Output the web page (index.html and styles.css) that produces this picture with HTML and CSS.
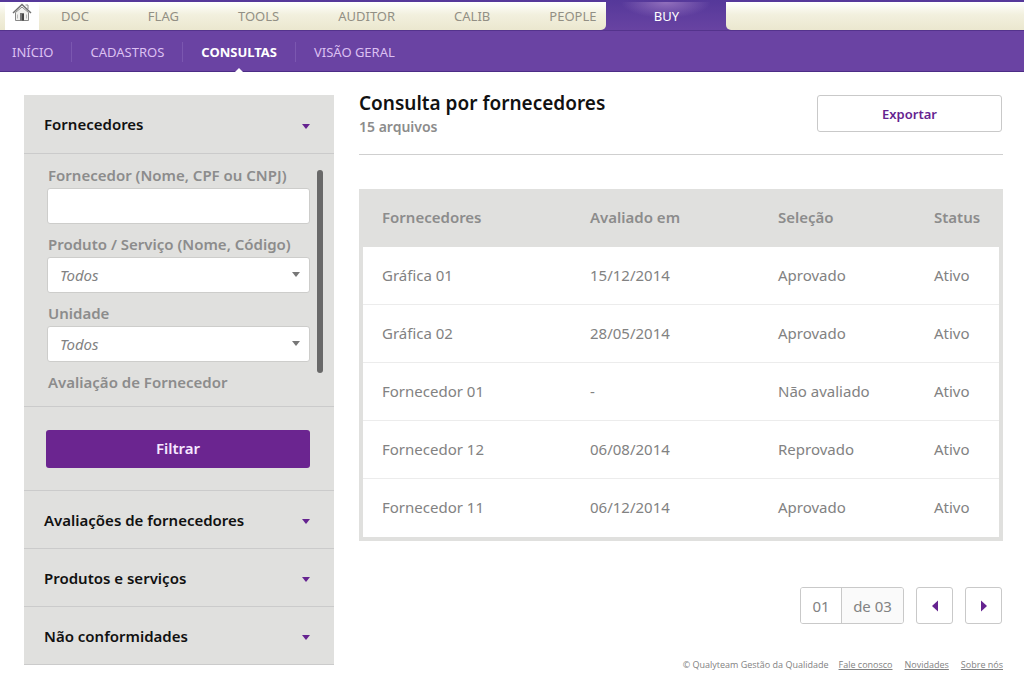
FILE: index.html
```html
<!DOCTYPE html>
<html lang="pt-BR">
<head>
<meta charset="utf-8">
<meta name="viewport" content="width=device-width, initial-scale=1">
<title>Consulta por fornecedores</title>
<link rel="stylesheet" href="styles.css">
</head>
<body>
<header>
  <nav class="modules" aria-label="Módulos">
    <div class="modules-left">
      <a class="home" href="#" aria-label="Home">
        <svg width="20" height="20" viewBox="0 0 20 20" fill="none">
          <path d="M13.500 3h2.500v4" stroke="#8a8a8a"/>
          <path d="M3.500 10.500v8h13v-8L10 5z" fill="#f1f1ef" stroke="#888"/>
          <path d="M1 11L10 2.500l9 8.500" stroke="#707070" stroke-width="1.500"/>
          <path d="M8 11h4v7.500H8z" fill="#777"/>
          <path d="M10 12v6.500h2V12z" fill="#444"/>
          <path d="M5.500 12.500v4M14.500 12.500v4" stroke="#bbb"/>
        </svg>
      </a>
      <a class="module" href="#">DOC</a>
      <a class="module" href="#">FLAG</a>
      <a class="module" href="#">TOOLS</a>
      <a class="module" href="#">AUDITOR</a>
      <a class="module" href="#">CALIB</a>
      <a class="module" href="#">PEOPLE</a>
    </div>
    <a class="module-current" href="#" aria-current="page">BUY</a>
    <div class="modules-right"></div>
  </nav>
  <nav class="sections" aria-label="Seções">
    <a class="section" href="#">INÍCIO</a>
    <a class="section" href="#">CADASTROS</a>
    <a class="section current" href="#" aria-current="page">CONSULTAS</a>
    <a class="section" href="#">VISÃO GERAL</a>
  </nav>
</header>
<div class="page">
  <aside class="sidebar">
    <button class="accordion" type="button" aria-expanded="true">Fornecedores<span class="caret"></span></button>
    <form class="filters">
      <div class="fields-area">
        <div class="fields">
          <div class="field">
            <label for="supplier">Fornecedor (Nome, CPF ou CNPJ)</label>
            <input class="control" id="supplier" type="text">
          </div>
          <div class="field">
            <label for="product">Produto / Serviço (Nome, Código)</label>
            <div class="select"><select class="control" id="product"><option>Todos</option></select></div>
          </div>
          <div class="field">
            <label for="unit">Unidade</label>
            <div class="select"><select class="control" id="unit"><option>Todos</option></select></div>
          </div>
          <div class="field"><span class="label">Avaliação de Fornecedor</span></div>
        </div>
        <div class="thumb"></div>
      </div>
      <div class="actions"><button class="filter-button" type="submit">Filtrar</button></div>
    </form>
    <button class="accordion" type="button">Avaliações de fornecedores<span class="caret"></span></button>
    <button class="accordion" type="button">Produtos e serviços<span class="caret"></span></button>
    <button class="accordion" type="button">Não conformidades<span class="caret"></span></button>
  </aside>
  <main class="content">
    <div class="heading">
      <div>
        <h1>Consulta por fornecedores</h1>
        <p class="count">15 arquivos</p>
      </div>
      <button class="export" type="button">Exportar</button>
    </div>
    <table class="results">
      <thead>
        <tr><th class="col-name">Fornecedores</th><th class="col-date">Avaliado em</th><th class="col-choice">Seleção</th><th class="col-status">Status</th></tr>
      </thead>
      <tbody>
        <tr><td>Gráfica 01</td><td>15/12/2014</td><td>Aprovado</td><td>Ativo</td></tr>
        <tr><td>Gráfica 02</td><td>28/05/2014</td><td>Aprovado</td><td>Ativo</td></tr>
        <tr><td>Fornecedor 01</td><td>-</td><td>Não avaliado</td><td>Ativo</td></tr>
        <tr><td>Fornecedor 12</td><td>06/08/2014</td><td>Reprovado</td><td>Ativo</td></tr>
        <tr><td>Fornecedor 11</td><td>06/12/2014</td><td>Aprovado</td><td>Ativo</td></tr>
      </tbody>
    </table>
    <div class="pager">
      <div class="pages">
        <input class="page-number" type="text" value="01" aria-label="Página">
        <span class="page-total">de 03</span>
      </div>
      <button class="step" type="button" aria-label="Anterior"><svg width="8" height="12" viewBox="0 0 8 12"><path d="M7 0.500v11L1 6z" fill="#652390"/></svg></button>
      <button class="step" type="button" aria-label="Próxima"><svg width="8" height="12" viewBox="0 0 8 12"><path d="M1 0.500v11L7 6z" fill="#652390"/></svg></button>
    </div>
    <footer class="footer">
      <span>© Qualyteam Gestão da Qualidade</span>
      <div class="links"><a href="#">Fale conosco</a><a href="#">Novidades</a><a href="#">Sobre nós</a></div>
    </footer>
  </main>
</div>
</body>
</html>
```
FILE: styles.css
```css
* { box-sizing: border-box; }
body {
  margin: 0;
  background: #fff;
  color: #828282;
  font: 15px/20px "Noto Sans", "Open Sans", sans-serif;
}
button, input, select { font: inherit; color: inherit; margin: 0; }
a { color: inherit; }
h1, p { margin: 0; }

.modules {
  display: flex;
  height: 31px;
  padding-top: 2px;
  background: linear-gradient(#55389a, #6843a2);
  border-bottom: 1px solid #54338c;
  font-size: 13px;
}
.modules a, .sections a { text-decoration: none; }
.modules-left, .modules-right {
  background: linear-gradient(#fff, #f2f0de 45%, #ebe7cf);
}
.modules-left {
  display: flex;
  align-items: center;
  gap: 59px;
  padding: 0 10px 0 5px;
  border-radius: 0 0 5px 0;
  color: #928f84;
}
.modules-right { flex: 1; border-radius: 0 0 0 5px; }
.home {
  display: flex;
  align-items: flex-start;
  justify-content: center;
  align-self: stretch;
  width: 34px;
  margin-right: -37px;
  background: #fff;
}
.module-current {
  display: flex;
  align-items: center;
  justify-content: center;
  width: 120px;
  color: #fff;
  background: radial-gradient(ellipse 45px 16px at 50% 0, #9270bd, transparent);
}
.sections {
  display: flex;
  align-items: center;
  height: 41px;
  padding: 2px 0 0;
  background: #6a43a3;
  border-bottom: 1px solid #4c2d86;
  font-size: 13px;
  color: #dcc0f2;
}
.section { padding: 0 18px; border-left: 1px solid #7b57b0; }
.section:first-child { padding-left: 12px; border-left: 0; }
.section.current { position: relative; color: #fff; font-weight: 700; }
.section.current::after {
  content: "";
  position: absolute;
  left: 50%;
  bottom: -10px;
  margin-left: -4px;
  border: 4px solid transparent;
  border-top: 0;
  border-bottom-color: #fff;
}

.page {
  display: grid;
  grid-template-columns: 310px 1fr;
  gap: 25px;
  align-items: start;
  padding: 23px 21px 16px 24px;
}
.sidebar { background: #e0e0de; }
.accordion {
  display: flex;
  align-items: center;
  justify-content: space-between;
  width: 100%;
  height: 59px;
  padding: 0 24px 0 20px;
  border: 0;
  border-bottom: 1px solid #cbcbcb;
  background: none;
  color: #111;
  font-weight: 600;
  text-align: left;
}
.filters ~ .accordion { height: 58px; }
.caret { border: 4px solid transparent; border-top: 5px solid #652390; border-bottom: 0; margin-top: 4px; }
.fields-area {
  display: flex;
  gap: 7px;
  padding: 10px 11px 11px 23px;
  border-bottom: 1px solid #cbcbcb;
}
.fields { flex: 1; display: grid; gap: 9px; }
.field label, .label { display: block; padding: 0 0 2px 1px; line-height: 22px; font-weight: 600; color: #8c8c8c; }
.control {
  display: block;
  width: 100%;
  height: 36px;
  padding: 0 12px;
  border: 1px solid #cdcdcb;
  border-radius: 3px;
  background: #fff;
}
.select { position: relative; }
.select select { appearance: none; font-style: italic; }
.select::after {
  content: "";
  position: absolute;
  right: 10px;
  top: 15px;
  border: 4px solid transparent;
  border-top: 5px solid #777;
  border-bottom: 0;
  pointer-events: none;
}
.thumb { width: 6px; height: 203px; margin-top: 6px; border-radius: 3px; background: #696969; }
.actions { padding: 23px 24px 22px 22px; border-bottom: 1px solid #cbcbcb; }
.filter-button {
  display: block;
  width: 100%;
  height: 38px;
  padding: 0 0 2px;
  border: 0;
  border-radius: 3px;
  background: #6b2590;
  color: #f6e8ff;
  font-weight: 600;
}

.heading {
  display: flex;
  justify-content: space-between;
  align-items: flex-start;
  height: 60px;
  padding-right: 1px;
  border-bottom: 1px solid #cfcfcf;
}
h1 { font-size: 19px; line-height: 16px; font-weight: 600; color: #111; }
.count { margin-top: 6px; font-size: 14px; font-weight: 600; color: #8c8c8c; }
.export {
  width: 185px;
  height: 37px;
  border: 1px solid #c9c9c9;
  border-radius: 3px;
  background: #fff;
  color: #652390;
  font-size: 13px;
  font-weight: 600;
}
.results {
  width: 100%;
  margin-top: 34px;
  table-layout: fixed;
  border-spacing: 0;
  border: 4px solid #e0e0de;
  border-top: 0;
}
.results th, .results td { height: 58px; padding: 0 0 2px 19px; text-align: left; }
.results th { background: #e0e0de; font-weight: 600; color: #8c8c8c; }
.results td { border-bottom: 1px solid #ececec; }
.results tr:last-child td { border-bottom: 0; }
.col-name { width: 208px; }
.col-date { width: 188px; }
.col-choice { width: 156px; }
.col-status { width: auto; }
.pager { display: flex; justify-content: flex-end; gap: 12px; margin-top: 46px; padding-right: 1px; }
.pages { display: flex; width: 104px; height: 37px; border: 1px solid #c9c9c9; border-radius: 3px; overflow: hidden; }
.page-number { width: 41px; padding: 0; border: 0; border-right: 1px solid #c9c9c9; text-align: center; background: #fff; }
.page-total { flex: 1; display: flex; align-items: center; justify-content: center; background: #fafafa; }
.step {
  display: flex;
  align-items: center;
  justify-content: center;
  width: 37px;
  height: 37px;
  padding: 0;
  border: 1px solid #c9c9c9;
  border-radius: 3px;
  background: #fff;
}
.footer { display: flex; justify-content: flex-end; gap: 10px; margin-top: 31px; font-family: "Open Sans", "Noto Sans", sans-serif; font-size: 9px; }
.links { display: flex; gap: 12px; }
```
